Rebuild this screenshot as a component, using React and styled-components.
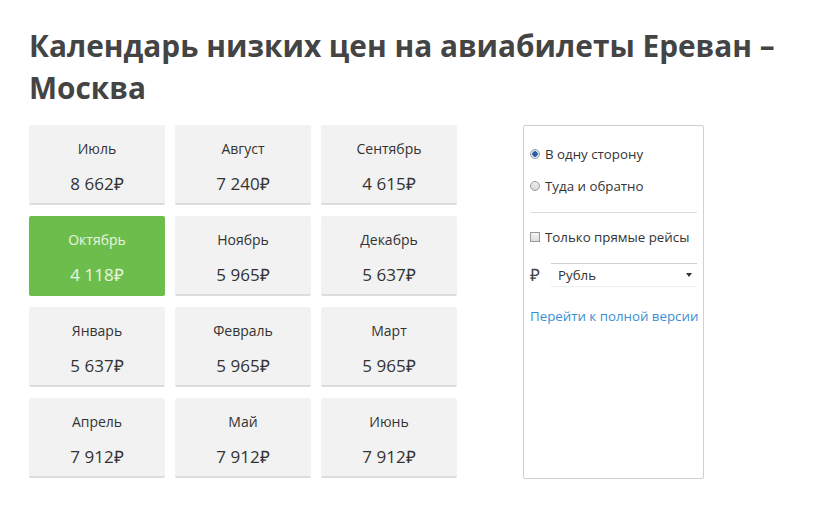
import React from 'react'
import styled, { createGlobalStyle } from 'styled-components'

const GlobalStyle = createGlobalStyle`
    body {
        margin: 0;
        background: #fff;
        font-family: "Open Sans", "Liberation Sans", sans-serif;
        color: #333;
    }
`

const months = [
    { name: 'Июль', price: '8 662' },
    { name: 'Август', price: '7 240' },
    { name: 'Сентябрь', price: '4 615' },
    { name: 'Октябрь', price: '4 118', best: true },
    { name: 'Ноябрь', price: '5 965' },
    { name: 'Декабрь', price: '5 637' },
    { name: 'Январь', price: '5 637' },
    { name: 'Февраль', price: '5 965' },
    { name: 'Март', price: '5 965' },
    { name: 'Апрель', price: '7 912' },
    { name: 'Май', price: '7 912' },
    { name: 'Июнь', price: '7 912' },
]

function App() {
    return (
        <>
            <GlobalStyle />
            <Page>
                <Title>Календарь низких цен на авиабилеты Ереван – Москва</Title>
                <Content>
                    <Grid>
                        {months.map((m) => (
                            <MonthCard key={m.name} $best={m.best}>
                                <MonthName>{m.name}</MonthName>
                                <Price>{m.price}₽</Price>
                            </MonthCard>
                        ))}
                    </Grid>
                    <Sidebar>
                        <RadioRow>
                            <Radio $checked />
                            В одну сторону
                        </RadioRow>
                        <RadioRow>
                            <Radio />
                            Туда и обратно
                        </RadioRow>
                        <Divider />
                        <CheckRow>
                            <Checkbox />
                            Только прямые рейсы
                        </CheckRow>
                        <CurrencyRow>
                            <RubSign>₽</RubSign>
                            <Select>
                                <span>Рубль</span>
                                <Caret />
                            </Select>
                        </CurrencyRow>
                        <FullLink href="#">Перейти к полной версии</FullLink>
                    </Sidebar>
                </Content>
            </Page>
        </>
    )
}

export default App

const Page = styled.div`
    padding: 25px 29px;
`

const Title = styled.h1`
    margin: 0 0 16px;
    max-width: 780px;
    font-size: 29.8px;
    line-height: 42px;
    font-weight: 700;
    color: #444;
`

const Content = styled.div`
    display: flex;
    align-items: flex-start;
    gap: 66px;
`

const Grid = styled.div`
    display: grid;
    grid-template-columns: repeat(3, 136px);
    grid-auto-rows: 80px;
    column-gap: 10px;
    row-gap: 11px;
`

const MonthCard = styled.div`
    display: flex;
    flex-direction: column;
    align-items: center;
    box-sizing: border-box;
    padding-top: 14px;
    border-radius: 2px;
    background: ${(p) => (p.$best ? '#6cbd4c' : '#f2f2f2')};
    border-bottom: 2px solid ${(p) => (p.$best ? '#6cbd4c' : '#dcdcdc')};
    color: ${(p) => (p.$best ? '#e8f6e0' : '#333')};
`

const MonthName = styled.div`
    font-size: 14px;
    line-height: 20px;
`

const Price = styled.div`
    margin-top: 13px;
    font-size: 17px;
    line-height: 24px;
`

const Sidebar = styled.div`
    box-sizing: border-box;
    width: 181px;
    height: 354px;
    padding: 18px 6px 0 6px;
    border: 1px solid #d0d0d0;
    border-radius: 2px;
    font-size: 13.3px;
    color: #333;
    white-space: nowrap;
`

const RadioRow = styled.div`
    display: flex;
    align-items: center;
    gap: 5px;
    height: 20px;
    margin-bottom: 12px;
`

const Radio = styled.span`
    box-sizing: border-box;
    width: 10px;
    height: 10px;
    border-radius: 50%;
    border: 1px solid #9a9a9a;
    background: ${(p) =>
        p.$checked
            ? 'radial-gradient(circle, #2a5fa8 0 2.5px, #dfe8f4 3px)'
            : 'linear-gradient(#eee, #d8d8d8)'};
`

const Divider = styled.div`
    height: 1px;
    background: #ddd;
    margin: 16px 0 14px;
`

const CheckRow = styled.div`
    display: flex;
    align-items: center;
    gap: 5px;
    height: 20px;
`

const Checkbox = styled.span`
    box-sizing: border-box;
    width: 10px;
    height: 10px;
    border: 1px solid #9a9a9a;
    background: linear-gradient(#f4f4f4, #dedede);
`

const CurrencyRow = styled.div`
    display: flex;
    align-items: center;
    gap: 10px;
    margin-top: 16px;
`

const RubSign = styled.span`
    font-size: 17px;
    width: 11px;
    color: #444;
`

const Select = styled.div`
    flex: 1;
    display: flex;
    align-items: center;
    justify-content: space-between;
    box-sizing: border-box;
    height: 23px;
    padding: 0 5px 0 7px;
    border-top: 1px solid #cfcfcf;
    box-shadow: 0 1px 1px #f0f0f0;
    font-size: 13.3px;
`

const Caret = styled.span`
    width: 0;
    height: 0;
    border-left: 3px solid transparent;
    border-right: 3px solid transparent;
    border-top: 4px solid #333;
`

const FullLink = styled.a`
    display: block;
    margin-top: 21px;
    color: #3a8fd2;
    text-decoration: none;
    font-size: 13.3px;
`
